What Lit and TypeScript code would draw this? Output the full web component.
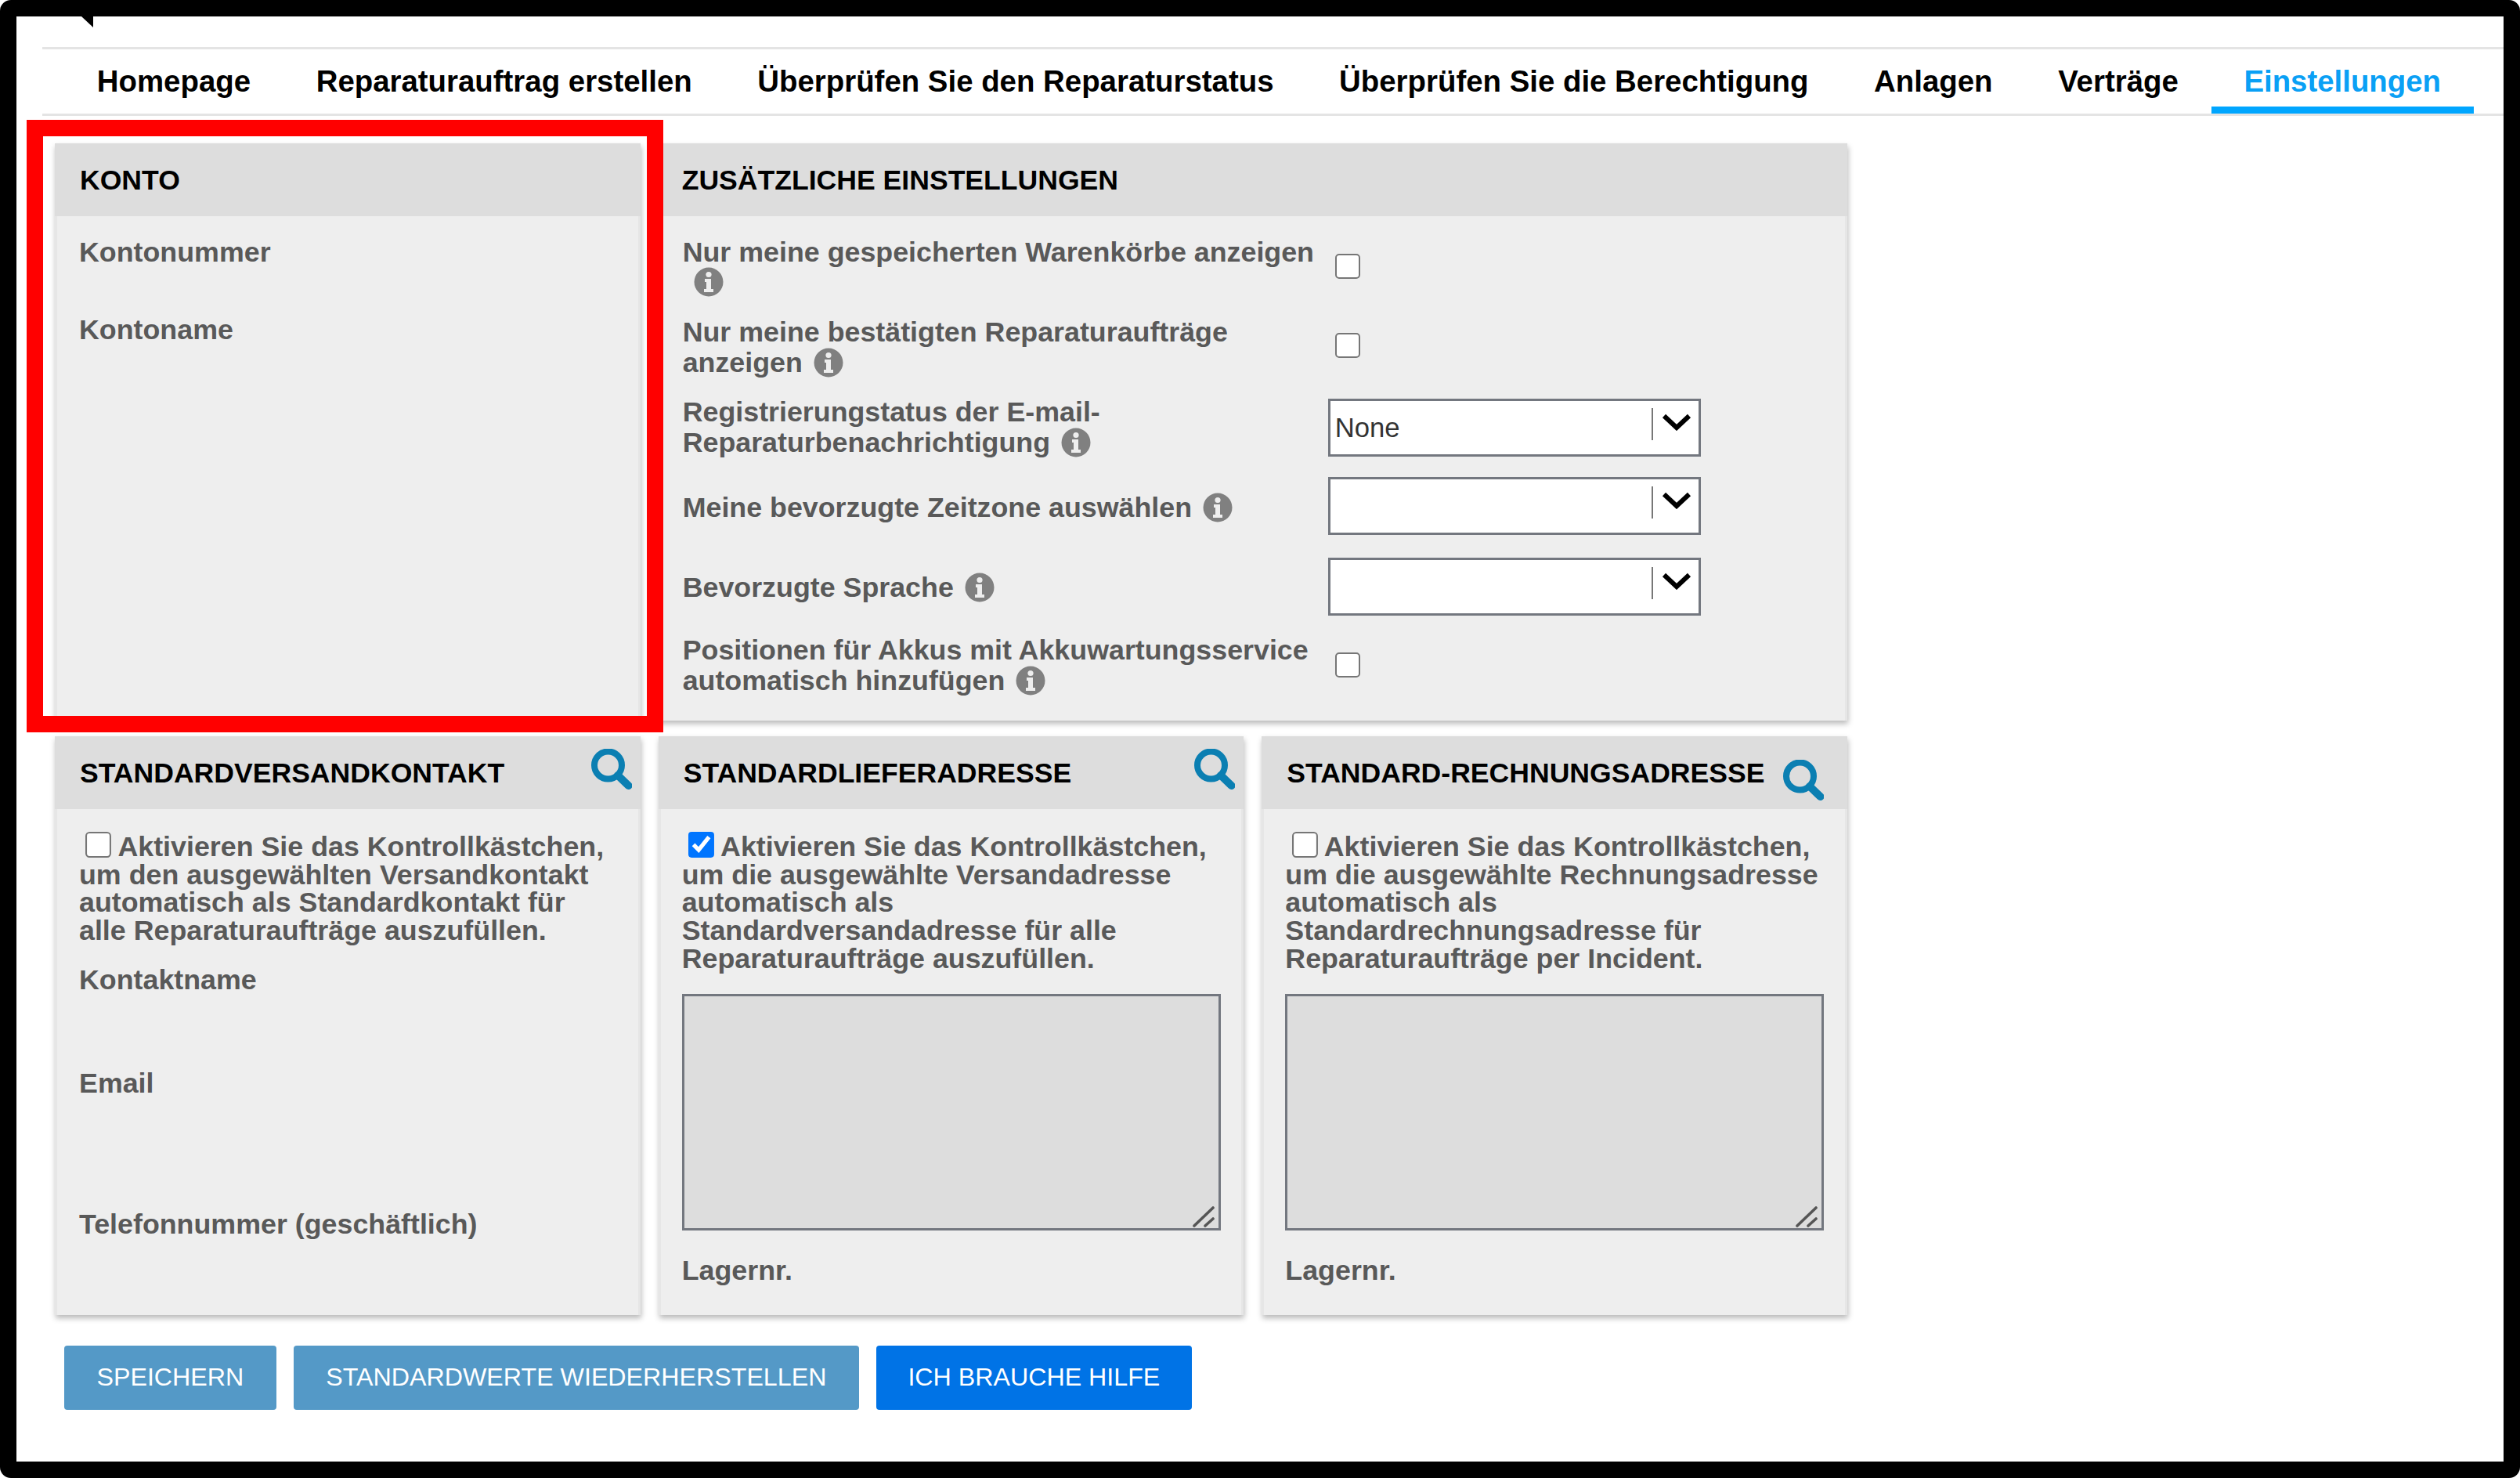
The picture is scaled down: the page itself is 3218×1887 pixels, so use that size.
import { LitElement, html, css, svg } from "lit";
import { customElement } from "lit/decorators.js";

const info = html`<svg class="info" viewBox="0 0 38 38" aria-hidden="true"><circle cx="19" cy="19" r="18.5" fill="#808080"/><circle cx="19" cy="9.5" r="3.6" fill="#eee"/><path d="M14 15h8v13h3v4H13v-4h3v-9h-2z" fill="#eee"/></svg>`;
const search = svg`<circle cx="21.5" cy="21" r="17.5" fill="none" stroke="#0b7fb2" stroke-width="8"/><path d="M34 34l13.5 13" stroke="#0b7fb2" stroke-width="10" stroke-linecap="round"/>`;

@customElement("app-root")
export class AppRoot extends LitElement {
  static styles = css`
    :host { display: block; width: 3218px; height: 1887px; background: #fff; font-family: "Liberation Sans", Arial, sans-serif; }
    .frame { position: relative; box-sizing: border-box; width: 3218px; height: 1887px; border: 21px solid #000; border-radius: 14px; background: #fff; overflow: hidden; }
    .notch { position: absolute; left: 83px; top: 0; width: 15px; height: 14px; }
    .nav { display: flex; box-sizing: border-box; height: 88px; margin: 39px 0 0 33px; padding-left: 28px; border-top: 3px solid #e4e4e4; border-bottom: 3px solid #e4e4e4; }
    .tab { box-sizing: border-box; height: 82px; padding: 0 41.8px; font-size: 38.4px; line-height: 82px; font-weight: 700; color: #000; white-space: nowrap; }
    .tab.on { color: #0aa0f5; border-bottom: 9px solid #00a6ff; }
    .grid { display: grid; width: 2289px; margin: 35px 0 0 49px; grid-template-columns: repeat(3, 1fr); grid-template-rows: 737px 739px; gap: 20px 23px; }
    .panel { display: flex; flex-direction: column; min-width: 0; background: #eee; box-shadow: 1px 4px 7px rgba(0, 0, 0, .28); }
    .wide { grid-column: 2 / 4; }
    .head { display: flex; flex: none; align-items: center; justify-content: space-between; box-sizing: border-box; height: 93px; padding: 2px 11px 0 32px; background: #ddd; font-size: 35.6px; font-weight: 700; color: #000; white-space: nowrap; }
    .head svg { width: 52px; height: 52px; margin-top: -12px; flex: none; }
    .head.low svg { margin: 16px 19px 0 0; }
    .wide .head { padding-left: 30px; }
    .body { flex: 1; padding: 0 29px 0 28px; border: solid #e6e6e6; border-width: 0 3px; font-size: 35.8px; font-weight: 700; color: #595959; }
    .addr { padding-left: 27px; }
    .field { line-height: 38px; }
    .settings { padding: 14px 27px 14px 28px; }
    .row { display: flex; align-items: center; height: 102.4px; }
    .row.last { height: 98px; margin-top: -1px; }
    .label { width: 809px; line-height: 38.6px; flex: none; }
    .info { display: inline-block; width: 38px; height: 38px; margin-left: 14px; vertical-align: -7px; }
    input[type="checkbox"] { width: 16px; height: 16px; margin: 0; flex: none; zoom: 2; }
    .row input { margin: -1px 0 0 12px; }
    .row:nth-child(2) input { margin-top: -3px; }
    .select { position: relative; box-sizing: border-box; width: 476px; height: 74px; margin-left: 15px; padding-left: 6px; border: 3px solid #73777f; background: #fff; font-size: 34.7px; font-weight: 400; line-height: 68px; color: #333; }
    .select.up { margin-top: -4px; }
    .select i { position: absolute; left: 410px; top: 9px; width: 2px; height: 41px; background: #777; }
    .select svg { position: absolute; left: 423px; top: 16px; width: 38px; height: 22px; }
    .note { margin: 0; padding-top: 29px; line-height: 35.7px; }
    .note input { zoom: 2.06; vertical-align: -1px; margin-left: 4px; margin-right: 4px; }
    .box { position: relative; box-sizing: border-box; width: 688px; height: 302px; margin: 27px 0 0 0; border: 3px solid #73777f; background: #ddd; }
    .box svg { position: absolute; right: 4px; bottom: 1px; width: 30px; height: 28px; }
    .lager { margin: 32px 0 0 0; line-height: 38px; }
    .c1 { margin-top: 27px; }
    .c1b { margin-top: 61px; }
    .c1c { margin-top: 25px; }
    .c2 { margin-top: 94px; }
    .c3 { margin-top: 142px; }
    .buttons { display: flex; gap: 22px; margin: 39px 0 0 61px; }
    .btn { box-sizing: border-box; height: 82px; border-radius: 4px; background: #5499c7; padding: 0 41.5px; color: #fff; font-size: 32.2px; line-height: 81px; white-space: nowrap; }
    .btn.blue { background: #0073e6; padding: 0 40.5px; }
    .mark { position: absolute; left: 13px; top: 132px; box-sizing: border-box; width: 813px; height: 782px; border: 21px solid #f00; }
  `;

  private row(label: unknown, ctl: unknown, last = false) {
    return html`<div class="row ${last ? "last" : ""}"><div class="label">${label}</div>${ctl}</div>`;
  }

  private select(value = "", up = false) {
    return html`<div class="select ${up ? "up" : ""}">${value}<i></i><svg viewBox="0 0 38 22"><path d="M3 3l16 15L35 3" fill="none" stroke="#000" stroke-width="6"/></svg></div>`;
  }

  private address(title: string, lines: unknown, checked: boolean, low = false) {
    return html`<section class="panel">
      <div class="head ${low ? "low" : ""}"><span>${title}</span><svg viewBox="0 0 52 52">${search}</svg></div>
      <div class="body addr">
        <p class="note"><input type="checkbox" .checked=${checked} />${lines}</p>
        <div class="box"><svg viewBox="0 0 30 28"><path d="M3 26L27 3M17 26l10-9" fill="none" stroke="#555" stroke-width="3.6" stroke-linecap="round"/></svg></div>
        <div class="lager">Lagernr.</div>
      </div>
    </section>`;
  }

  render() {
    const tabs = ["Homepage", "Reparaturauftrag erstellen", "Überprüfen Sie den Reparaturstatus", "Überprüfen Sie die Berechtigung", "Anlagen", "Verträge"];
    const check = html`<input type="checkbox" />`;
    return html`<div class="frame">
      <svg class="notch" viewBox="0 0 15 14"><path d="M0 0h15v14z" fill="#000"/></svg>
      <nav class="nav">${tabs.map((t) => html`<div class="tab">${t}</div>`)}<div class="tab on">Einstellungen</div></nav>
      <div class="grid">
        <section class="panel">
          <div class="head"><span>KONTO</span></div>
          <div class="body">
            <div class="field c1">Kontonummer</div>
            <div class="field c1b">Kontoname</div>
          </div>
        </section>
        <section class="panel wide">
          <div class="head"><span>ZUSÄTZLICHE EINSTELLUNGEN</span></div>
          <div class="body settings">
            ${this.row(html`Nur meine gespeicherten Warenkörbe anzeigen ${info}`, check)}
            ${this.row(html`Nur meine bestätigten Reparaturaufträge anzeigen${info}`, check)}
            ${this.row(html`Registrierungstatus der E-mail-Reparaturbenachrichtigung${info}`, this.select("None"))}
            ${this.row(html`Meine bevorzugte Zeitzone auswählen${info}`, this.select("", true))}
            ${this.row(html`Bevorzugte Sprache${info}`, this.select("", true))}
            ${this.row(html`Positionen für Akkus mit Akkuwartungsservice automatisch hinzufügen${info}`, check, true)}
          </div>
        </section>
        <section class="panel">
          <div class="head"><span>STANDARDVERSANDKONTAKT</span><svg viewBox="0 0 52 52">${search}</svg></div>
          <div class="body">
            <p class="note"><input type="checkbox" />Aktivieren Sie das Kontrollkästchen,<br />um den ausgewählten Versandkontakt<br />automatisch als Standardkontakt für<br />alle Reparaturaufträge auszufüllen.</p>
            <div class="field c1c">Kontaktname</div>
            <div class="field c2">Email</div>
            <div class="field c3">Telefonnummer (geschäftlich)</div>
          </div>
        </section>
        ${this.address("STANDARDLIEFERADRESSE", html`Aktivieren Sie das Kontrollkästchen,<br />um die ausgewählte Versandadresse<br />automatisch als<br />Standardversandadresse für alle<br />Reparaturaufträge auszufüllen.`, true)}
        ${this.address("STANDARD-RECHNUNGSADRESSE", html`Aktivieren Sie das Kontrollkästchen,<br />um die ausgewählte Rechnungsadresse<br />automatisch als<br />Standardrechnungsadresse für<br />Reparaturaufträge per Incident.`, false, true)}
      </div>
      <div class="buttons">
        <div class="btn">SPEICHERN</div>
        <div class="btn">STANDARDWERTE WIEDERHERSTELLEN</div>
        <div class="btn blue">ICH BRAUCHE HILFE</div>
      </div>
      <div class="mark"></div>
    </div>`;
  }
}
